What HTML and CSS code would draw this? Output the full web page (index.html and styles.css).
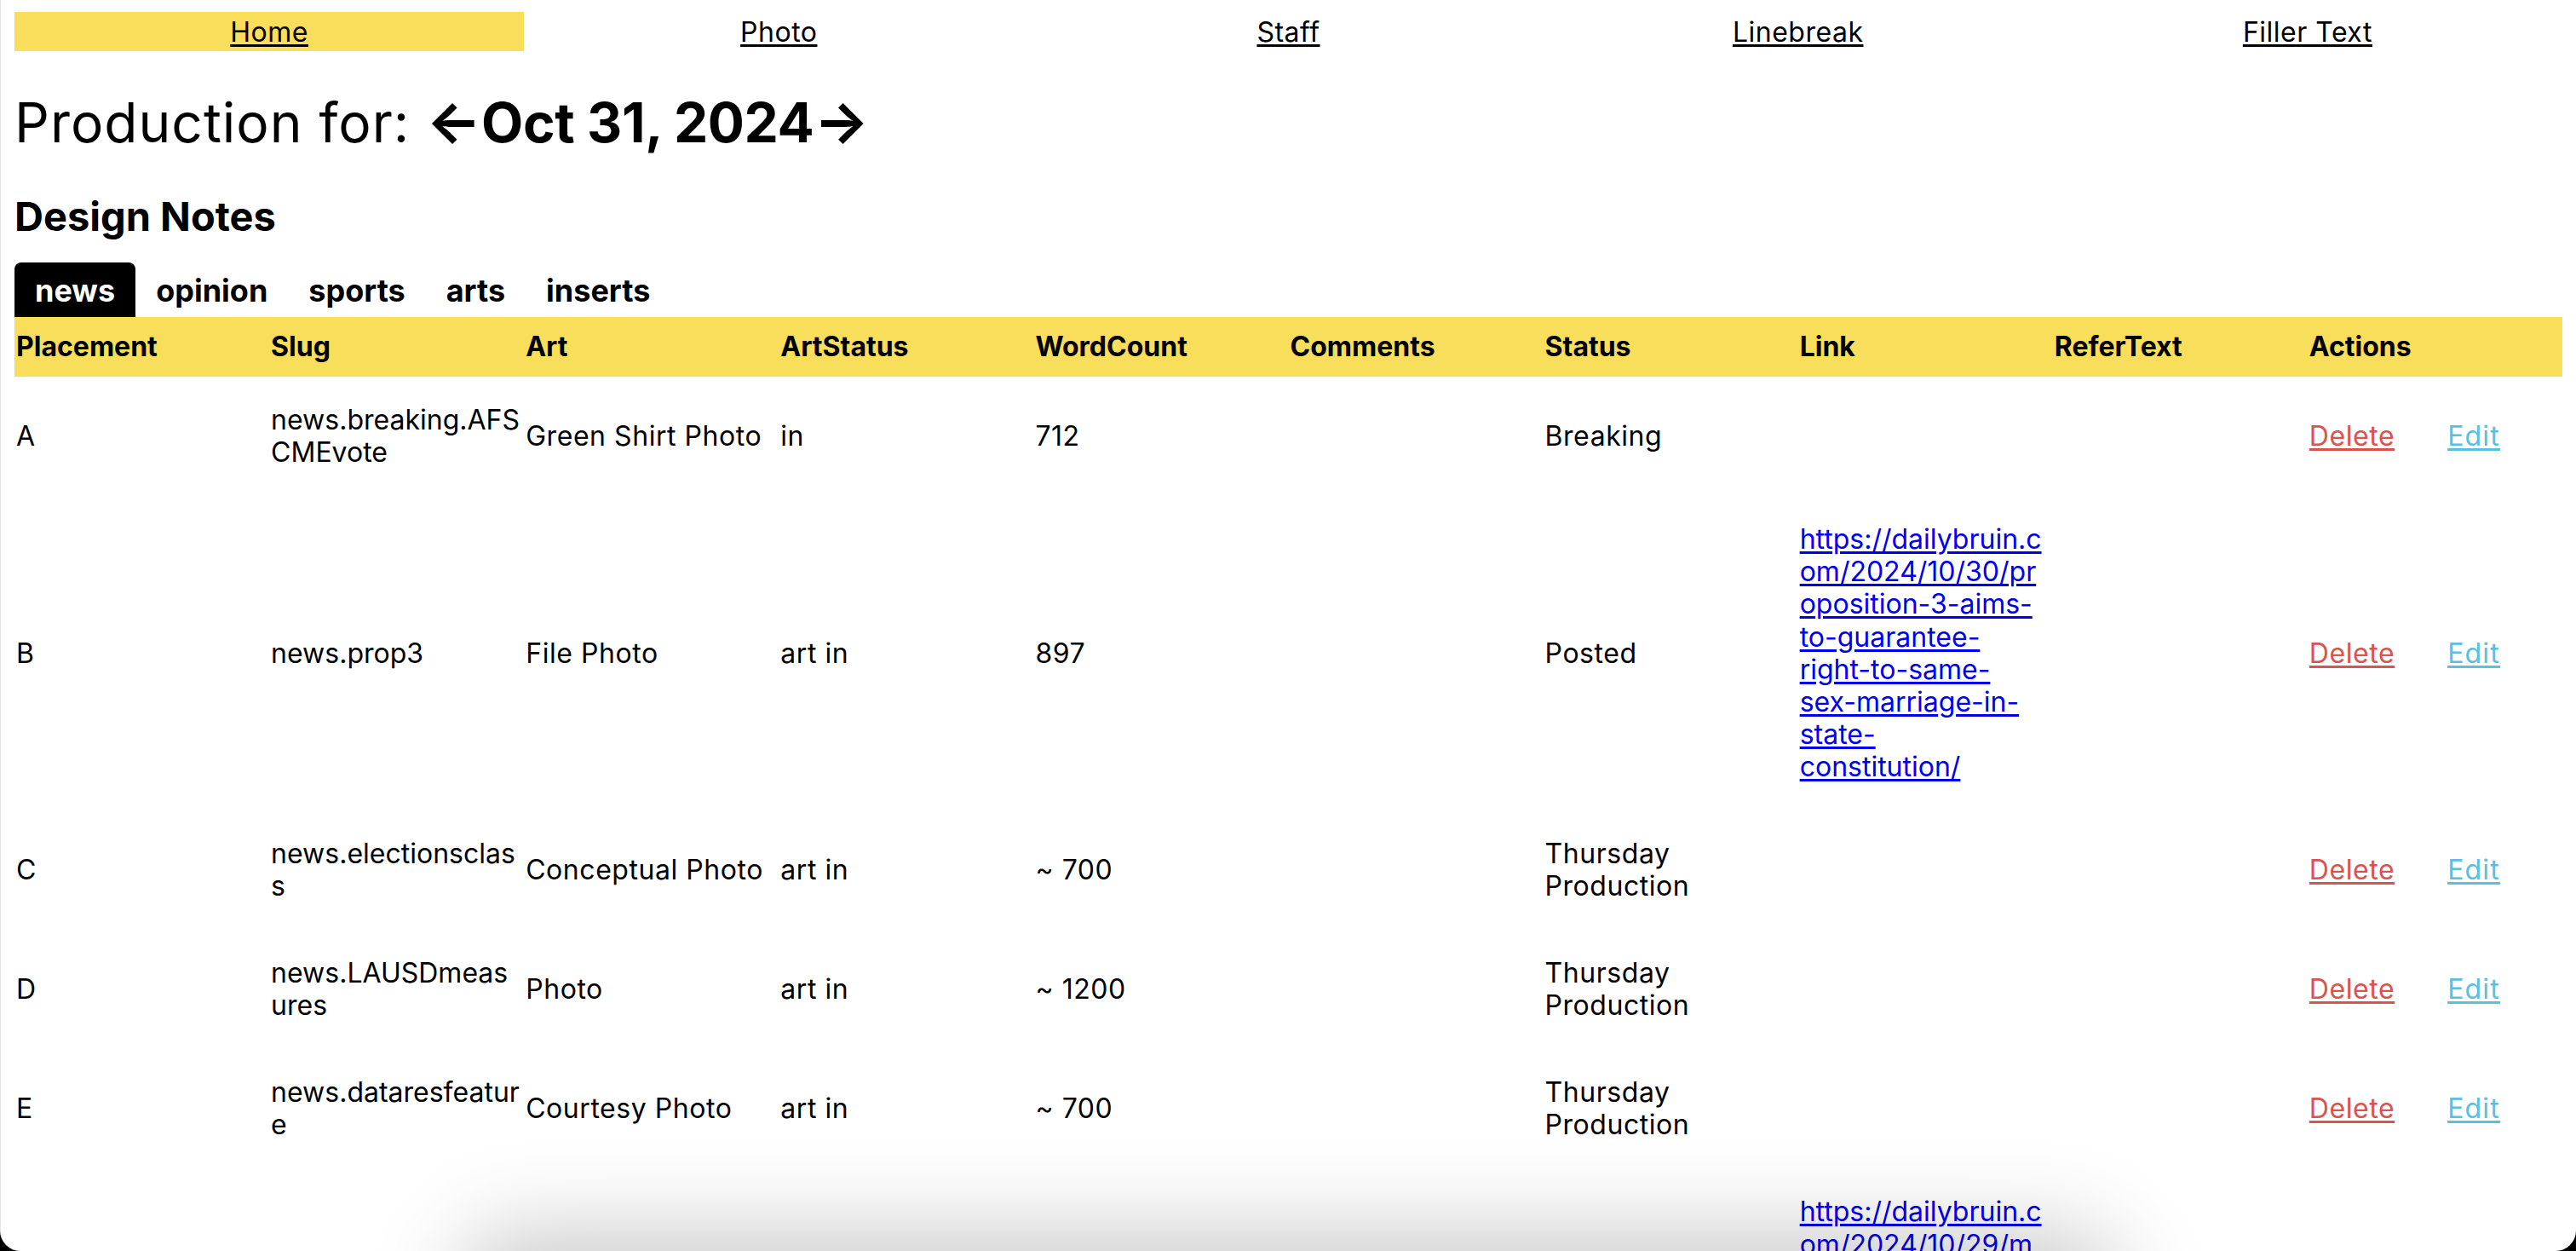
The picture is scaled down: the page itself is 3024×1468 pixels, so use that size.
FILE: index.html
```html
<!DOCTYPE html>
<html>
<head>
<meta charset="utf-8">
<title>Production</title>
<link rel="stylesheet" href="styles.css">
</head>
<body>
<div class="window">
  <nav class="topnav">
    <a class="nav-item active" href="#">Home</a>
    <a class="nav-item" href="#">Photo</a>
    <a class="nav-item" href="#">Staff</a>
    <a class="nav-item" href="#">Linebreak</a>
    <a class="nav-item" href="#">Filler Text</a>
  </nav>

  <h1 class="title"><span class="title-label">Production for: </span><a class="arrow" href="#">←</a><b>Oct 31, 2024</b><a class="arrow" href="#">→</a></h1>

  <h2 class="section-title">Design Notes</h2>

  <div class="tabs">
    <button class="tab active">news</button>
    <button class="tab">opinion</button>
    <button class="tab">sports</button>
    <button class="tab">arts</button>
    <button class="tab">inserts</button>
  </div>

  <table class="notes">
    <thead>
      <tr>
        <th>Placement</th><th>Slug</th><th>Art</th><th>ArtStatus</th><th>WordCount</th>
        <th>Comments</th><th>Status</th><th>Link</th><th>ReferText</th><th>Actions</th>
      </tr>
    </thead>
    <tbody>
      <tr>
        <td>A</td><td class="slug">news.breaking.AFSCMEvote</td><td>Green Shirt Photo</td><td>in</td><td>712</td>
        <td></td><td>Breaking</td><td class="linkcell"></td><td></td>
        <td><div class="actions"><a class="del" href="#">Delete</a><a class="edit" href="#">Edit</a></div></td>
      </tr>
      <tr>
        <td>B</td><td class="slug">news.prop3</td><td>File Photo</td><td>art in</td><td>897</td>
        <td></td><td>Posted</td>
        <td class="linkcell"><a class="link" href="#">https://dailybruin.c<br>om/2024/10/30/pr<br>oposition-3-aims-<br>to-guarantee-<br>right-to-same-<br>sex-marriage-in-<br>state-<br>constitution/</a></td><td></td>
        <td><div class="actions"><a class="del" href="#">Delete</a><a class="edit" href="#">Edit</a></div></td>
      </tr>
      <tr>
        <td>C</td><td class="slug">news.electionsclass</td><td>Conceptual Photo</td><td>art in</td><td>~ 700</td>
        <td></td><td>Thursday Production</td><td class="linkcell"></td><td></td>
        <td><div class="actions"><a class="del" href="#">Delete</a><a class="edit" href="#">Edit</a></div></td>
      </tr>
      <tr>
        <td>D</td><td class="slug">news.LAUSDmeasures</td><td>Photo</td><td>art in</td><td>~ 1200</td>
        <td></td><td>Thursday Production</td><td class="linkcell"></td><td></td>
        <td><div class="actions"><a class="del" href="#">Delete</a><a class="edit" href="#">Edit</a></div></td>
      </tr>
      <tr>
        <td>E</td><td class="slug">news.dataresfeature</td><td>Courtesy Photo</td><td>art in</td><td>~ 700</td>
        <td></td><td>Thursday Production</td><td class="linkcell"></td><td></td>
        <td><div class="actions"><a class="del" href="#">Delete</a><a class="edit" href="#">Edit</a></div></td>
      </tr>
      <tr>
        <td></td><td class="slug"></td><td></td><td></td><td></td>
        <td></td><td></td>
        <td class="linkcell"><a class="link" href="#">https://dailybruin.c<br>om/2024/10/29/m<br>easure-hlh/</a></td><td></td>
        <td></td>
      </tr>
    </tbody>
  </table>

  <div class="bottom-shadow"></div>
</div>
</body>
</html>
```
FILE: styles.css
```css
html, body {
  margin: 0;
  padding: 0;
  background: #000;
}

body {
  font-family: Inter, "Noto Sans", sans-serif;
  font-size: 32px;
  line-height: 1.173;
  color: #000;
}

.window {
  position: relative;
  height: 100vh;
  box-sizing: border-box;
  overflow: hidden;
  background: #fff;
  border-radius: 0 0 24px 24px;
  padding: 14px 16px 0;
  border-left: 1px solid #e6e6e6;
}

/* top navigation */
.topnav {
  display: grid;
  grid-template-columns: repeat(5, 1fr);
  height: 46px;
}

.nav-item {
  display: flex;
  align-items: center;
  justify-content: center;
  color: #000;
  letter-spacing: 0.5px;
  text-decoration: underline;
  text-underline-offset: 3px;
  text-decoration-thickness: 3px;
  padding-top: 2px;
}

.nav-item.active {
  background: #f8de5a;
}

/* headings */
.title {
  font-size: 64px;
  font-weight: 400;
  line-height: 1.173;
  margin: 43px 0 43px;
}

.title-label {
  letter-spacing: 1px;
}

.title b {
  font-weight: 700;
  letter-spacing: -0.4px;
}

.arrow {
  color: #000;
  text-decoration: none;
  font-weight: 700;
  font-size: 68px;
}

.section-title {
  font-size: 47px;
  font-weight: 700;
  line-height: 1.173;
  margin: 0 0 27px;
}

/* tabs */
.tabs {
  display: flex;
  align-items: flex-end;
}

.tab {
  font-family: inherit;
  font-size: 36px;
  font-weight: 700;
  line-height: 1.173;
  color: #000;
  background: transparent;
  border: 0;
  border-radius: 8px 8px 0 0;
  padding: 12px 24px 10px;
  margin: 0;
  cursor: pointer;
}

.tab.active {
  background: #000;
  color: #fff;
}

/* table */
.notes {
  width: 100%;
  table-layout: fixed;
  border-collapse: collapse;
  line-height: 1.19;
}

.notes th {
  background: #f8de5a;
  text-align: left;
  font-weight: 700;
  padding: 16px 2px;
  vertical-align: middle;
}

.notes td {
  padding: 32px 2px;
  vertical-align: middle;
  font-weight: 400;
  letter-spacing: 0.55px;
}

.notes td.slug {
  letter-spacing: 0;
  overflow-wrap: anywhere;
}

.notes td.linkcell {
  letter-spacing: 0;
  overflow-wrap: anywhere;
}

.link {
  color: #0000ee;
  text-decoration: underline;
  text-underline-offset: 3px;
  text-decoration-thickness: 3px;
}

.actions {
  display: flex;
  gap: 62px;
}

.del,
.edit {
  text-decoration: underline;
  text-underline-offset: 3px;
  text-decoration-thickness: 3px;
}

.del {
  color: #d9534f;
}

.edit {
  color: #5bc0de;
  letter-spacing: 1.2px;
}

/* shadow of an element just below the visible window */
.bottom-shadow {
  position: absolute;
  left: 560px;
  right: 560px;
  top: 100%;
  height: 120px;
  border-radius: 40px;
  box-shadow: 0 0 110px 20px rgba(0, 0, 0, 0.22);
}
```
